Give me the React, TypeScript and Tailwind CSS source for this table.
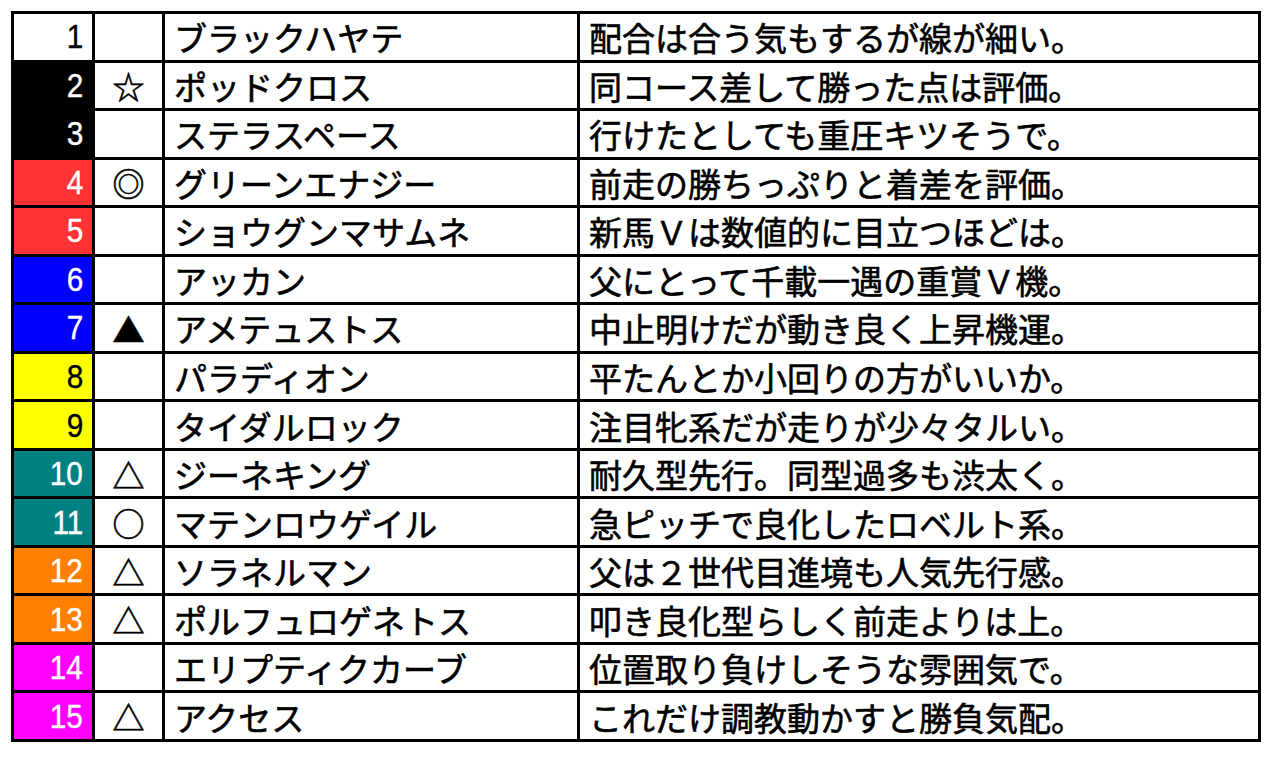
const rows = [
  { no: 1, bg: "bg-white", fg: "text-black", mark: "", name: "ブラックハヤテ", note: "配合は合う気もするが線が細い。" },
  { no: 2, bg: "bg-black", fg: "text-white", mark: "☆", name: "ポッドクロス", note: "同コース差して勝った点は評価。" },
  { no: 3, bg: "bg-black", fg: "text-white", mark: "", name: "ステラスペース", note: "行けたとしても重圧キツそうで。" },
  { no: 4, bg: "bg-[#ff3333]", fg: "text-white", mark: "◎", name: "グリーンエナジー", note: "前走の勝ちっぷりと着差を評価。" },
  { no: 5, bg: "bg-[#ff3333]", fg: "text-white", mark: "", name: "ショウグンマサムネ", note: "新馬Ｖは数値的に目立つほどは。" },
  { no: 6, bg: "bg-[#0000ff]", fg: "text-white", mark: "", name: "アッカン", note: "父にとって千載一遇の重賞Ｖ機。" },
  { no: 7, bg: "bg-[#0000ff]", fg: "text-white", mark: "▲", name: "アメテュストス", note: "中止明けだが動き良く上昇機運。" },
  { no: 8, bg: "bg-[#ffff00]", fg: "text-black", mark: "", name: "パラディオン", note: "平たんとか小回りの方がいいか。" },
  { no: 9, bg: "bg-[#ffff00]", fg: "text-black", mark: "", name: "タイダルロック", note: "注目牝系だが走りが少々タルい。" },
  { no: 10, bg: "bg-[#008080]", fg: "text-white", mark: "△", name: "ジーネキング", note: "耐久型先行。同型過多も渋太く。" },
  { no: 11, bg: "bg-[#008080]", fg: "text-white", mark: "○", name: "マテンロウゲイル", note: "急ピッチで良化したロベルト系。" },
  { no: 12, bg: "bg-[#ff8000]", fg: "text-white", mark: "△", name: "ソラネルマン", note: "父は２世代目進境も人気先行感。" },
  { no: 13, bg: "bg-[#ff8000]", fg: "text-white", mark: "△", name: "ポルフュロゲネトス", note: "叩き良化型らしく前走よりは上。" },
  { no: 14, bg: "bg-[#ff00ff]", fg: "text-white", mark: "", name: "エリプティクカーブ", note: "位置取り負けしそうな雰囲気で。" },
  { no: 15, bg: "bg-[#ff00ff]", fg: "text-white", mark: "△", name: "アクセス", note: "これだけ調教動かすと勝負気配。" },
]

// MS Gothic in the original is heavier than Noto's regular cut
const jp = "font-['Noto_Sans_CJK_JP',sans-serif] [-webkit-text-stroke:0.6px_currentColor]"

export default function App() {
  return (
    <div className="w-[1278px] h-[764px] bg-white pt-[11px] pl-[11px]">
      <div className="w-[1250px] h-[731px] bg-black p-[3px] grid grid-cols-[78px_67px_412px_678px] grid-rows-15 gap-[3px]">
        {rows.map((r) => (
          <div key={r.no} className="contents">
            <div className={`${r.bg} ${r.fg} flex items-center justify-end pr-[9px]`}>
              <span className="text-[33px] leading-none font-['Liberation_Sans',sans-serif] scale-x-[0.9] origin-right [-webkit-text-stroke:0.4px_currentColor]">
                {r.no}
              </span>
            </div>
            <div className={`bg-white flex items-center justify-center text-[32px] leading-none text-black ${jp}`}>
              {r.mark}
            </div>
            <div className={`bg-white flex items-center pl-[9px] pt-[2px] text-[33px] leading-none text-black whitespace-nowrap ${jp}`}>
              {r.name}
            </div>
            <div className={`bg-white flex items-center pl-[9px] pt-[2px] text-[33px] leading-none text-black whitespace-nowrap ${jp}`}>
              {r.note}
            </div>
          </div>
        ))}
      </div>
    </div>
  )
}
